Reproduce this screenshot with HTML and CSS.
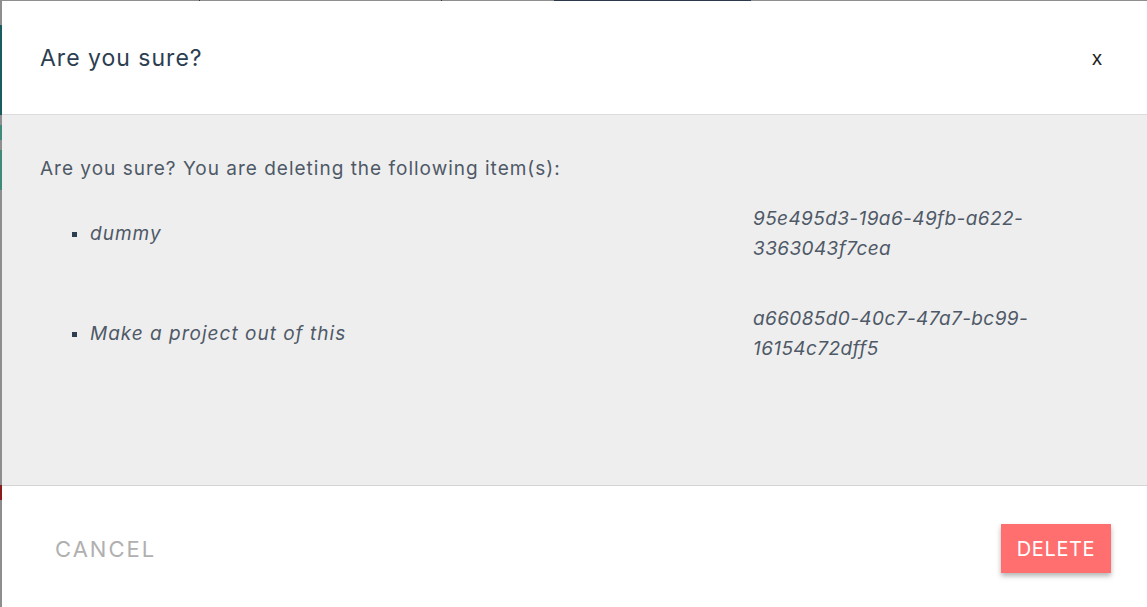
FILE: index.html
```html
<!DOCTYPE html>
<html lang="en">
<head>
<meta charset="utf-8">
<title>Are you sure?</title>
<link rel="stylesheet" href="styles.css">
</head>
<body>
<div class="modal">
  <header class="modal-header">
    <h2 class="modal-title">Are you sure?</h2>
    <button class="close">x</button>
  </header>
  <section class="modal-body">
    <p class="intro">Are you sure? You are deleting the following item(s):</p>
    <ul class="items">
      <li class="item"><span class="name">dummy</span><span class="uuid">95e495d3-19a6-49fb-a622-3363043f7cea</span></li>
      <li class="item"><span class="name">Make a project out of this</span><span class="uuid">a66085d0-40c7-47a7-bc99-16154c72dff5</span></li>
    </ul>
  </section>
  <footer class="modal-footer">
    <button class="btn-cancel">CANCEL</button>
    <button class="btn-delete">DELETE</button>
  </footer>
</div>
</body>
</html>
```
FILE: styles.css
```css
html, body {
  margin: 0;
  height: 607px;
  overflow: hidden;
}
body {
  font-family: Inter, "Open Sans", sans-serif;
  background:
    linear-gradient(to right, transparent 199px, #333 199px, #333 200px, transparent 200px, transparent 441px, #333 441px, #333 442px, transparent 442px, transparent 554px, #2b3a4b 554px, #2b3a4b 751px, transparent 751px) top left / 100% 1px no-repeat,
    linear-gradient(to bottom, transparent 25px, #1b5d5f 25px, #1b5d5f 115px, transparent 115px, transparent 125px, #3f8a78 125px, #3f8a78 140px, transparent 140px, transparent 150px, #3f8a78 150px, #3f8a78 190px, transparent 190px, transparent 485px, #8a1c1c 485px, #8a1c1c 500px, transparent 500px) top left / 2px 100% no-repeat,
    #8e8e8e;
}
.modal {
  margin: 1px 0 0 2px;
  background: #fff;
  height: 606px;
  display: flex;
  flex-direction: column;
}
.modal-header {
  height: 114px;
  flex: none;
  box-sizing: border-box;
  border-bottom: 1px solid #dcdcdc;
  display: flex;
  align-items: center;
  justify-content: space-between;
  padding: 0 45px 0 38px;
}
.modal-title {
  margin: 0;
  font-weight: 400;
  font-size: 23px;
  color: #2c3e50;
  letter-spacing: 1px;
}
.close {
  border: 0;
  background: none;
  padding: 0;
  font-family: "Liberation Sans", sans-serif;
  font-size: 20px;
  color: #222;
  margin-top: 2px;
}
.modal-body {
  background: #eeeeee;
  height: 371px;
  flex: none;
  box-sizing: border-box;
  border-bottom: 1px solid #d4d4d4;
  padding: 40px 38px 0 38px;
  color: #4e5967;
}
.intro {
  margin: 0;
  font-size: 19px;
  line-height: 28px;
  letter-spacing: 1px;
}
.items {
  list-style: none;
  margin: 21px 0 0 0;
  padding: 0 0 0 32px;
}
.item {
  display: flex;
  align-items: center;
  font-style: italic;
  font-size: 19px;
  line-height: 30px;
  margin-bottom: 40px;
  color: #4e5967;
  letter-spacing: 1px;
}
.item::before {
  content: "";
  flex: none;
  width: 5px;
  height: 5px;
  background: #2c3e50;
  margin-right: 13px;
}
.name {
  flex: 1;
}
.uuid {
  flex: none;
  width: 356px;
  letter-spacing: 0.4px;
}
.modal-footer {
  display: flex;
  align-items: center;
  justify-content: space-between;
  padding: 38px 36px 0 38px;
}
.btn-cancel {
  border: 0;
  background: none;
  font-family: inherit;
  font-size: 22px;
  color: #b0b0b0;
  padding: 10px 15px;
  letter-spacing: 2px;
}
.btn-delete {
  border: 0;
  background: #ff6f6f;
  color: #fff;
  font-family: inherit;
  font-size: 20px;
  width: 110px;
  height: 49px;
  letter-spacing: 0.6px;
  box-shadow: 0 3px 5px rgba(0,0,0,0.3);
}
```
